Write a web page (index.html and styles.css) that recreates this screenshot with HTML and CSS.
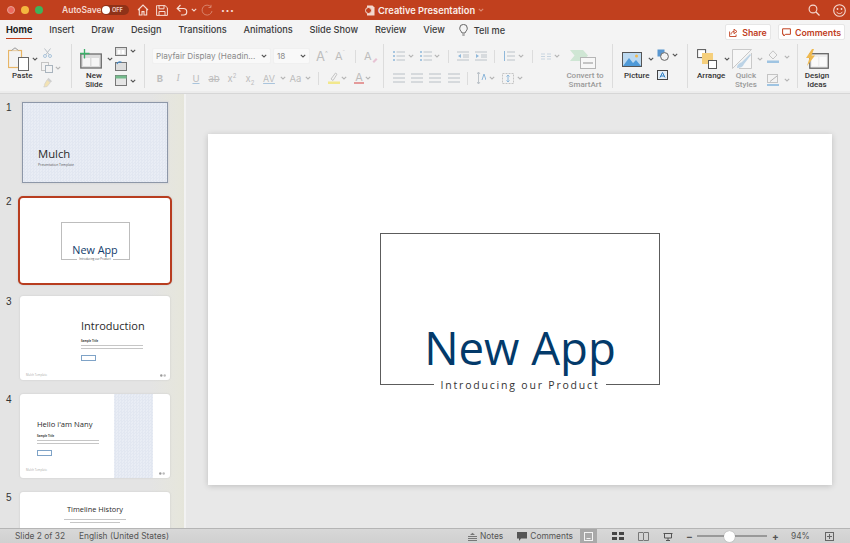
FILE: index.html
```html
<!DOCTYPE html>
<html lang="en">
<head>
<meta charset="utf-8">
<title>Creative Presentation</title>
<link rel="stylesheet" href="styles.css">
</head>
<body>
<svg class="defs" width="0" height="0">
  <symbol id="ch" viewBox="0 0 6 4"><path d="M.8.8 3 3 5.2.8" fill="none" stroke="currentColor" stroke-width="1.1"/></symbol>
  <symbol id="lines" viewBox="0 0 12 10"><path d="M0 1h12M0 5h12M0 9h12" stroke="#b9c0c6" stroke-width="1"/></symbol>
  <symbol id="marks" viewBox="0 0 6 3"><circle cx="1.300" cy="1.500" r="1.200" fill="#9a9a9a"/><circle cx="4.700" cy="1.500" r="1.200" fill="#bcbcbc"/></symbol>
</svg>

<header class="titlebar">
  <span class="light red"></span><span class="light yellow"></span><span class="light green"></span>
  <span class="autosave">AutoSave</span>
  <span class="toggle"><span class="knob"></span><span class="off">OFF</span></span>
  <svg class="tb-home" width="12" height="12" viewBox="0 0 12 12"><path d="M1 6 6 1l5 5M2.3 5v6H5V7.6h2V11h2.700V5" fill="none" stroke="#f6dcd4" stroke-width="1.100"/></svg>
  <svg class="tb-save" width="12" height="11" viewBox="0 0 12 11"><path d="M1.500.6h7.500l2.400 2.200v7.600H.6V.6zM3 .8v3h5v-3M3 10V6.500h6V10" fill="none" stroke="#f6dcd4" stroke-width="1"/></svg>
  <svg class="tb-undo" width="12" height="12" viewBox="0 0 12 12"><path d="M1.500 4.500h6a3 3 0 0 1 0 6.500H5M4.500 1 1.200 4.500 4.500 7.500" fill="none" stroke="#f6dcd4" stroke-width="1.200"/></svg>
  <svg class="chev tb-ch" width="6" height="4"><use href="#ch"/></svg>
  <svg class="tb-redo" width="12" height="12" viewBox="0 0 12 12"><path d="M10 3a5 5 0 1 0 1 4M10 .8V3.500H7.500" fill="none" stroke="#d9826a" stroke-width="1"/></svg>
  <span class="dots">···</span>
  <span class="doc">
    <svg width="10" height="11" viewBox="0 0 10 11"><path d="M2 .5h5.500L9.500 2.500v8H2z" fill="#f3d8cf"/><circle cx="3.500" cy="5.500" r="3" fill="#c1401e" stroke="#f3d8cf"/></svg>
    <span class="doc-name">Creative Presentation</span>
    <svg class="doc-ch" width="6" height="4"><use href="#ch"/></svg>
  </span>
  <svg class="tb-search" width="12" height="12" viewBox="0 0 12 12"><circle cx="5" cy="5" r="3.900" fill="none" stroke="#f6dcd4" stroke-width="1.100"/><path d="m8 8 3.500 3.500" stroke="#f6dcd4" stroke-width="1.200"/></svg>
  <svg class="tb-smile" width="13" height="13" viewBox="0 0 13 13"><circle cx="6.500" cy="6.500" r="5.800" fill="none" stroke="#f6dcd4" stroke-width="1.100"/><circle cx="4.500" cy="5" r=".9" fill="#f6dcd4"/><circle cx="8.500" cy="5" r=".9" fill="#f6dcd4"/><path d="M3.500 7.800c1.500 2.400 4.500 2.400 6 0" fill="none" stroke="#f6dcd4"/></svg>
</header>

<nav class="tabs">
  <span class="tab active">Home</span>
  <span class="tab">Insert</span>
  <span class="tab">Draw</span>
  <span class="tab">Design</span>
  <span class="tab">Transitions</span>
  <span class="tab">Animations</span>
  <span class="tab">Slide Show</span>
  <span class="tab">Review</span>
  <span class="tab">View</span>
  <span class="tell">
    <svg width="9" height="12" viewBox="0 0 9 12"><path d="M3 9C2.500 7.300.7 6.500.7 4.200a3.800 3.800 0 0 1 7.600 0C8.300 6.500 6.500 7.300 6 9zM3.300 11h2.400" fill="none" stroke="#555" stroke-width=".9"/></svg>
    <span>Tell me</span>
  </span>
  <span class="tab-actions">
    <span class="btn share">
      <svg width="9" height="9" viewBox="0 0 9 9"><path d="M5 3.500C3 3.500 2 5 2 6.500M5 1.200 8 3.500 5 5.700zM.6 3.500v5h6.500V6.500" fill="none" stroke="#c1401e" stroke-width=".9"/></svg>
      Share
    </span>
    <span class="btn comments">
      <svg width="9" height="9" viewBox="0 0 9 9"><path d="M.6.8h7.800v5.500H3.500L1.800 8V6.300H.6z" fill="none" stroke="#c1401e"/></svg>
      Comments
    </span>
  </span>
</nav>

<section class="ribbon">
  <div class="group g-clip">
    <div class="big paste">
      <div class="icobox">
        <svg width="21" height="24" viewBox="0 0 21 24"><rect x=".5" y="3.500" width="13" height="17" fill="none" stroke="#e7b566" stroke-width="1.200"/><path d="M3.500 3.500 7 .8l3.500 2.700" fill="#eee" stroke="#999"/><rect x="10.500" y="10.500" width="10" height="13" fill="#fff" stroke="#666"/></svg>
        <svg class="chev dark" width="6" height="4"><use href="#ch"/></svg>
      </div>
      <span class="lbl">Paste</span>
    </div>
    <div class="clip-tools">
      <svg class="ct-cut" width="9" height="10" viewBox="0 0 9 10"><path d="M1.500.5 6.500 7M7.500.5l-5 6.500" stroke="#b9c0c6"/><circle cx="2" cy="8" r="1.500" fill="none" stroke="#a9c4dc"/><circle cx="7" cy="8" r="1.500" fill="none" stroke="#a9c4dc"/></svg>
      <span class="ct-row">
        <svg width="12" height="11" viewBox="0 0 12 11"><rect x=".5" y=".5" width="7" height="8" fill="none" stroke="#c4c4c4"/><rect x="4.500" y="3.500" width="7" height="7" fill="#f3f3f3" stroke="#a9b4be"/></svg>
        <svg class="chev ml2" width="6" height="4"><use href="#ch"/></svg>
      </span>
      <svg class="ct-brush" width="10" height="11" viewBox="0 0 11 12"><path d="M6 .8 10 4.500 8 6 4.500 2.800z" fill="#cfcfcf"/><path d="M4.500 3 8 6 4.500 10.500.8 11c.6-1.200 1.300-2 .8-3z" fill="#f2e2b4" stroke="#c9c9c9" stroke-width=".6"/></svg>
    </div>
  </div>

  <div class="group g-slides">
    <div class="big newslide">
      <div class="icobox">
        <svg width="22" height="20" viewBox="0 0 22 20"><rect x=".8" y="5" width="20.500" height="14" fill="#dcdcdc" stroke="#6d6d6d" stroke-width="1.300"/><rect x="3" y="9" width="7" height="8" fill="#f6f6f6"/><rect x="11.500" y="9" width="7.500" height="8" fill="#f6f6f6"/><path d="M4.500 0v9.500M0 4.500h9.500" stroke="#3db06a" stroke-width="1.300"/></svg>
        <svg class="chev dark ml2" width="6" height="4"><use href="#ch"/></svg>
      </div>
      <span class="lbl">New<br>Slide</span>
    </div>
    <div class="slide-tools">
      <span class="st-row"><svg width="12" height="9" viewBox="0 0 12 9"><rect x=".5" y=".5" width="11" height="8" fill="#ddd" stroke="#777"/><rect x="2.500" y="3" width="3" height="4" fill="#fff"/><rect x="6.500" y="3" width="3" height="4" fill="#fff"/></svg><svg class="chev dark" width="6" height="4"><use href="#ch"/></svg></span>
      <span class="st-row"><svg width="12" height="10" viewBox="0 0 12 10"><rect x=".5" y="1.500" width="11" height="8" fill="#ddd" stroke="#777"/><path d="M6.500 1.300A3 3 0 0 0 2 3" fill="none" stroke="#3f86c6" stroke-width="1.200"/></svg></span>
      <span class="st-row"><svg width="12" height="11" viewBox="0 0 12 11"><rect x=".5" y=".5" width="11" height="10" fill="#e5e5e5" stroke="#777"/><rect x=".5" y=".5" width="11" height="3" fill="#74bb8c"/></svg><svg class="chev dark" width="6" height="4"><use href="#ch"/></svg></span>
    </div>
  </div>

  <div class="group g-font">
    <div class="row-top">
      <span class="select fontsel"><span>Playfair Display (Headin...</span><svg class="chev dark" width="6" height="4"><use href="#ch"/></svg></span>
      <span class="select sizesel"><span>18</span><svg class="chev dark" width="6" height="4"><use href="#ch"/></svg></span>
      <span class="dis bigA ml6">A<sup>^</sup></span>
      <span class="dis smallA ml8">A<sup>ˇ</sup></span>
      <span class="vsep ml9"></span>
      <span class="dis clearA ml8">A<svg width="6" height="6" viewBox="0 0 6 6"><path d="M.5 4.500 4 1l1.500 1.500-3.500 3.500z" fill="#e7c3d4"/></svg></span>
    </div>
    <div class="row-bot font-bot">
      <span class="cell w18 b">B</span>
      <span class="cell w18 it">I</span>
      <span class="cell w18 un">U</span>
      <span class="cell w18 st">ab</span>
      <span class="cell w18">x<sup>2</sup></span>
      <span class="cell w18">x<sub>2</sub></span>
      <span class="cell w20 av">AV</span><svg class="chev cw" width="6" height="4"><use href="#ch"/></svg>
      <span class="cell w17">Aa</span><svg class="chev cw" width="6" height="4"><use href="#ch"/></svg>
      <span class="vsep ml6"></span>
      <svg class="ml9" width="12" height="12" viewBox="0 0 12 12"><path d="m3 7 4.500-6 1.500 1.200L5 8.500z" fill="none" stroke="#c4c4c4"/><rect y="9.500" width="12" height="2.500" fill="#f2e88d"/></svg>
      <svg class="chev cw" width="6" height="4"><use href="#ch"/></svg>
      <span class="fontA ml6">A</span>
      <svg class="chev cw ml2" width="6" height="4"><use href="#ch"/></svg>
    </div>
  </div>

  <div class="group g-para">
    <div class="para-rows">
      <div class="row-top para-top">
        <svg width="12" height="10" viewBox="0 0 12 10"><path d="M3.500 1H12M3.500 5H12M3.500 9H12" stroke="#bcc3c9"/><path d="M0 1h2M0 5h2M0 9h2" stroke="#8fb8da" stroke-width="1.500"/></svg>
        <svg class="chev ml3" width="6" height="4"><use href="#ch"/></svg>
        <svg class="ml6" width="12" height="10" viewBox="0 0 12 10"><path d="M3.500 1H12M3.500 5H12M3.500 9H12" stroke="#bcc3c9"/><path d="M0 1h2M0 5h2M0 9h2" stroke="#8fb8da" stroke-width="1.500"/></svg>
        <svg class="chev ml2" width="6" height="4"><use href="#ch"/></svg>
        <span class="vsep ml8"></span>
        <svg class="ml8" width="12" height="10" viewBox="0 0 12 10"><path d="M0 1h12M6 4h6M6 6h6M0 9h12" stroke="#bcc3c9"/><path d="M4 3 1 5l3 2z" fill="#8fb8da"/></svg>
        <svg class="ml6" width="12" height="10" viewBox="0 0 12 10"><path d="M0 1h12M6 4h6M6 6h6M0 9h12" stroke="#bcc3c9"/><path d="m1 3 3 2-3 2z" fill="#8fb8da"/></svg>
        <span class="vsep ml7"></span>
        <svg class="ml8" width="12" height="10" viewBox="0 0 12 10"><path d="M4 1h8M4 5h8M4 9h8" stroke="#bcc3c9"/><path d="M1.500 0v10" stroke="#8fb8da"/></svg>
        <svg class="chev ml3" width="6" height="4"><use href="#ch"/></svg>
        <span class="vsep ml8"></span>
        <svg class="ml8" width="10" height="7" viewBox="0 0 10 7"><path d="M0 1h4M6 1h4M0 3.500h4M6 3.500h4M0 6h4M6 6h4" stroke="#c8d5e0"/></svg>
        <svg class="chev ml3" width="6" height="4"><use href="#ch"/></svg>
      </div>
      <div class="row-bot">
        <svg width="12" height="10"><use href="#lines"/></svg>
        <svg class="ml6" width="12" height="10"><use href="#lines"/></svg>
        <svg class="ml6" width="12" height="10"><use href="#lines"/></svg>
        <svg class="ml7" width="12" height="10"><use href="#lines"/></svg>
        <span class="vsep ml7"></span>
        <svg class="ml9" width="9" height="12" viewBox="0 0 9 12"><path d="M1.500 0v12M0 10l1.500 2L3 10M0 2l1.500-2L3 2" fill="none" stroke="#bcc3c9"/><path d="M5 8 7 2l2 6" fill="none" stroke="#8fb8da"/></svg>
        <svg class="chev ml3" width="6" height="4"><use href="#ch"/></svg>
        <svg class="ml6" width="14" height="11" viewBox="0 0 14 11"><rect x="1.500" y=".5" width="11" height="10" fill="none" stroke="#c4c4c4" stroke-dasharray="2 1"/><path d="M7 2v7M5.500 3.500 7 2l1.500 1.500M5.500 7.500 7 9l1.500-1.500" fill="none" stroke="#8fb8da"/></svg>
        <svg class="chev ml2" width="6" height="4"><use href="#ch"/></svg>
      </div>
    </div>
    <div class="big smartart">
      <div class="icobox">
        <svg width="30" height="20" viewBox="0 0 30 20"><path d="M0 1h13l5 5.500-5 5.500H0l4.500-5.500z" fill="#cfe6d4"/><rect x="10.500" y="8.500" width="15" height="11" fill="#f7f7f7" stroke="#b5b5b5"/><path d="M13 14h10" stroke="#c4c4c4" stroke-width="2"/></svg>
      </div>
      <span class="lbl dim">Convert to<br>SmartArt</span>
    </div>
  </div>

  <div class="group g-insert">
    <div class="big picture">
      <div class="icobox">
        <svg width="20" height="15" viewBox="0 0 20 15"><rect x=".5" y=".5" width="19" height="14" fill="#bcd9f0" stroke="#555"/><path d="M1 14 7 6l4 5 3-3 5 6z" fill="#4f9ad8"/><circle cx="14.500" cy="4" r="1.500" fill="#f2b84b"/></svg>
        <svg class="chev dark ml3" width="6" height="4"><use href="#ch"/></svg>
      </div>
      <span class="lbl">Picture</span>
    </div>
    <div class="ins-tools">
      <span class="st-row">
        <svg width="12" height="12" viewBox="0 0 12 12"><rect x=".5" y=".5" width="7" height="7" fill="#5a97d0"/><circle cx="7.500" cy="7.500" r="3.900" fill="#f3f3f3" stroke="#666"/></svg>
        <svg class="chev dark" width="6" height="4"><use href="#ch"/></svg>
      </span>
      <svg class="textbox" width="11" height="10" viewBox="0 0 11 10"><rect x=".5" y=".5" width="10" height="9" fill="#e5eef6" stroke="#444"/><path d="M3 7.500 5.500 2.500 8 7.500M4 6h3" fill="none" stroke="#2d7ec4"/></svg>
    </div>
  </div>

  <div class="group g-draw">
    <div class="big arrange">
      <div class="icobox">
        <svg width="21" height="20" viewBox="0 0 21 20"><rect x=".6" y=".6" width="8" height="8" fill="#fff" stroke="#555"/><rect x="5" y="4" width="11" height="11" fill="#f5cf7c"/><rect x="11.500" y="11.500" width="8" height="8" fill="#fff" stroke="#555"/></svg>
        <svg class="chev dark ml3" width="6" height="4"><use href="#ch"/></svg>
      </div>
      <span class="lbl">Arrange</span>
    </div>
    <div class="big quick">
      <div class="icobox">
        <svg width="20" height="20" viewBox="0 0 20 20"><path d="M.5 19.500V.5h19L.5 19.500zM19.500 4v15.500H7" fill="#f7f7f7" stroke="#c9c9c9"/><path d="M5 19c0-4 3-5 5-6l8-8 1 1-7 9c-1 3-4 4-7 4z" fill="#bcd3e6"/></svg>
        <svg class="chev ml2" width="6" height="4"><use href="#ch"/></svg>
      </div>
      <span class="lbl dim">Quick<br>Styles</span>
    </div>
    <div class="draw-tools">
      <span class="st-row">
        <svg width="12" height="13" viewBox="0 0 12 13"><path d="M6 .8 10 5 6 9 2 5z" fill="none" stroke="#c4c4c4"/><rect y="10.500" width="12" height="2.500" fill="#9fc4e2"/></svg>
        <svg class="chev ml2" width="6" height="4"><use href="#ch"/></svg>
      </span>
      <span class="st-row">
        <svg width="12" height="12" viewBox="0 0 12 12"><rect x=".5" y=".5" width="10" height="8" fill="none" stroke="#c4c4c4"/><path d="M3 7.500 10 2" stroke="#b4b4b4"/><rect y="10" width="12" height="2" fill="#9fc4e2"/></svg>
        <svg class="chev ml2" width="6" height="4"><use href="#ch"/></svg>
      </span>
    </div>
  </div>

  <div class="group g-design">
    <div class="big ideas">
      <div class="icobox">
        <svg width="23" height="20" viewBox="0 0 23 20"><rect x="3.800" y="4.700" width="18.500" height="14.500" fill="#eee" stroke="#666" stroke-width="1.300"/><rect x="6" y="8" width="6" height="9" fill="#fafafa"/><rect x="13.500" y="8" width="7" height="9" fill="#fafafa"/><path d="M6 0 0 9h3.500L1 17 9 6.500H5.500L8 0z" fill="#efb94f"/></svg>
      </div>
      <span class="lbl">Design<br>Ideas</span>
    </div>
  </div>
</section>

<main class="workspace">
  <aside class="sorter">
    <div class="entry first">
      <span class="num">1</span>
      <div class="thumb t1">
        <span class="t1-title">Mulch</span>
        <span class="t1-sub">Presentation Template</span>
      </div>
    </div>
    <div class="entry second">
      <span class="num">2</span>
      <div class="thumb t2">
        <div class="t2-frame">
          <span class="t2-title">New App</span>
          <span class="t2-cap">Introducing our Product</span>
        </div>
      </div>
    </div>
    <div class="entry">
      <span class="num">3</span>
      <div class="thumb t3">
        <span class="t3-title">Introduction</span>
        <span class="tiny-head">Sample Title</span>
        <span class="tiny-line"></span><span class="tiny-line"></span>
        <span class="tiny-btn"></span>
        <div class="foot"><span>Mulch Template</span><svg width="6" height="3"><use href="#marks"/></svg></div>
      </div>
    </div>
    <div class="entry">
      <span class="num">4</span>
      <div class="thumb t4">
        <div class="t4-text">
          <span class="t4-title">Hello i'am Nany</span>
          <span class="tiny-head">Sample Title</span>
          <span class="tiny-line"></span><span class="tiny-line"></span>
          <span class="tiny-btn"></span>
          <div class="foot"><span>Mulch Template</span></div>
        </div>
        <div class="t4-pane"></div>
        <div class="t4-end"><svg width="6" height="3"><use href="#marks"/></svg></div>
      </div>
    </div>
    <div class="entry">
      <span class="num">5</span>
      <div class="thumb t5">
        <span class="t5-title">Timeline History</span>
        <span class="tiny-line"></span><span class="tiny-line short"></span>
      </div>
    </div>
  </aside>
  <div class="stage">
    <article class="slide">
      <div class="frame">
        <h1>New App</h1>
        <span class="frame-cap">Introducing our Product</span>
      </div>
    </article>
  </div>
</main>

<footer class="status">
  <span class="st-l1">Slide 2 of 32</span>
  <span class="st-l2">English (United States)</span>
  <span class="st-right">
    <svg width="9" height="9" viewBox="0 0 9 9"><path d="M2 3 4.500.8 7 3z" fill="#777"/><path d="M0 4.500h9M0 6.500h9M0 8.500h9" stroke="#777"/></svg>
    <span class="st-notes">Notes</span>
    <svg class="ml14" width="10" height="9" viewBox="0 0 10 9"><path d="M0 0h10v6.500H4L2 9V6.500H0z" fill="#555"/></svg>
    <span class="st-notes">Comments</span>
    <span class="view-on"><svg width="9" height="9" viewBox="0 0 9 9"><rect x=".5" y=".5" width="8" height="8" fill="none" stroke="#f4f4f4"/><path d="M2.500 6.500h4" stroke="#f4f4f4"/></svg></span>
    <svg class="ml15" width="12" height="8" viewBox="0 0 12 8"><path d="M0 0h5v3H0zM7 0h5v3H7zM0 5h5v3H0zM7 5h5v3H7z" fill="#444"/></svg>
    <svg class="ml14" width="11" height="9" viewBox="0 0 11 9"><path d="M.5.500h4.500l.5.500.5-.5h4.500v8H6l-.5.500-.5-.5H.5zM5.500 1v7" fill="none" stroke="#777"/></svg>
    <svg class="ml14" width="10" height="9" viewBox="0 0 10 9"><path d="M.5 1.500h9M1.500 1.500v4.500h7V1.500M5 6v2.500M3 8.500h4" fill="none" stroke="#555"/></svg>
    <span class="zoom-minus">−</span>
    <span class="slider"><span class="thumb-dot"></span></span>
    <span class="zoom-plus">+</span>
    <span class="zoom-val">94%</span>
    <svg class="fit" width="9" height="9" viewBox="0 0 9 9"><rect x=".5" y=".5" width="8" height="8" fill="none" stroke="#666"/><path d="M4.500 2v5M2 4.500h5" stroke="#666"/></svg>
  </span>
</footer>
</body>
</html>
```

FILE: styles.css
```css
* { box-sizing: border-box; }
html, body { margin: 0; height: 543px; overflow: hidden; }
body {
  width: 850px;
  display: flex;
  flex-direction: column;
  font-family: Inter, "Liberation Sans", sans-serif;
  color: #333;
  background: #e8e8e8;
}
.defs { position: absolute; }
svg { display: block; flex: none; }

.ml2 { margin-left: 2px; }
.ml3 { margin-left: 3px; }
.ml5 { margin-left: 5px; }
.ml6 { margin-left: 6px; }
.ml7 { margin-left: 7px; }
.ml8 { margin-left: 8px; }
.ml9 { margin-left: 9px; }
.ml14 { margin-left: 14px; }
.ml15 { margin-left: 15px; }

.chev { color: #b5b5b5; width: 6px; height: 4px; }
.chev.dark { color: #555; }

/* Title bar */
.titlebar {
  height: 20px;
  flex: none;
  display: flex;
  align-items: center;
  padding-left: 7px;
  background: #c1401e;
  color: #f8e4dd;
}
.light { width: 8px; height: 8px; border-radius: 50%; margin-right: 6px; }
.light.red { background: #ec6a5e; border: 1px solid #e9a093; }
.light.yellow { background: #f4b73f; }
.light.green { background: #3fb35a; }
.autosave { margin-left: 13px; font-size: 8.500px; font-weight: 600; width: 39px; white-space: nowrap; color: #f5d9cf; }
.toggle {
  width: 28px; height: 10px; border-radius: 5px; background: #8f3218;
  display: flex; align-items: center; padding-left: 1px;
}
.knob { width: 8px; height: 8px; border-radius: 50%; background: #fff; }
.off { font-size: 5.500px; font-weight: 700; margin-left: 2px; color: #f0cfc4; }
.tb-home { margin-left: 8px; }
.tb-save { margin-left: 7px; }
.tb-undo { margin-left: 8px; }
.tb-ch { margin-left: 3px; color: #f3d8cf; }
.tb-redo { margin-left: 4px; }
.dots { margin-left: 8px; font-size: 12px; font-weight: 700; width: 12px; letter-spacing: .5px; color: #f6dcd4; }
.doc { margin-left: 132px; display: flex; align-items: center; gap: 3px; width: 443px; }
.doc-name { font-size: 9.300px; font-weight: 600; color: #fbeee9; white-space: nowrap; }
.doc-ch { color: #dd8c74; }
.tb-smile { margin-left: 13px; }

/* Tabs */
.tabs {
  height: 20px; flex: none;
  display: flex; align-items: flex-start;
  padding-left: 6px;
  background: #f4f4f4;
  font-size: 9.200px; font-weight: 500; color: #3c3c3c;
}
.tab { margin-right: 16.800px; height: 19px; line-height: 20px; white-space: nowrap; }
.tab.active { font-weight: 700; color: #222; border-bottom: 1.500px solid #c1401e; }
.tell { display: flex; align-items: center; gap: 6px; height: 20px; margin-left: -3px; white-space: nowrap; }
.tab-actions { margin-left: auto; display: flex; gap: 7px; padding: 4px 5px 0 0; }
.btn {
  height: 16px; display: flex; align-items: center; justify-content: center; gap: 4px;
  background: #fff; border: 1px solid #e6e6e6; border-radius: 2px;
  color: #c1401e; font-size: 8.800px; font-weight: 600;
}
.share { width: 46px; }
.comments { width: 67px; }

/* Ribbon */
.ribbon {
  height: 54px; flex: none;
  display: flex; align-items: flex-start;
  padding-top: 4px;
  background: #f3f3f3;
  border-bottom: 1px solid #d6d6d6;
  box-shadow: inset 0 -2px 0 #ececec;
}
.group { display: flex; height: 44px; border-right: 1px solid #dcdcdc; flex: none; }
.big { display: flex; flex-direction: column; align-items: center; padding-top: 3px; flex: none; }
.icobox { height: 24px; display: flex; align-items: center; gap: 3px; flex: none; }
.lbl { font-family: Roboto, sans-serif; font-size: 8px; line-height: 8.500px; font-weight: 500; text-align: center; color: #333; margin-top: 1px; white-space: nowrap; }
.lbl.dim { color: #9a9a9a; }

.g-clip { width: 72px; padding-left: 8px; }
.paste { width: 32px; align-items: flex-start; }
.paste .lbl { margin-left: 4px; }
.clip-tools { display: flex; flex-direction: column; gap: 4px; padding-top: 4px; margin-left: 1px; }
.ct-cut { margin-left: 2px; }
.ct-row { display: flex; align-items: center; }
.ct-brush { margin-left: 2px; }

.g-slides { width: 73px; padding-left: 8px; }
.newslide { width: 31px; align-items: flex-start; }
.newslide .lbl { margin-left: 3px; width: 22px; }
.slide-tools { display: flex; flex-direction: column; margin-left: 4px; }
.st-row { height: 15px; display: flex; align-items: center; gap: 3px; }

.g-font { width: 239px; padding-left: 7px; flex-direction: column; }
.row-top { display: flex; align-items: center; height: 16px; margin-top: 4px; }
.row-bot { display: flex; align-items: center; height: 18px; margin-top: 5px; color: #bdbdbd; font-size: 9.500px; }
.select {
  height: 16px; background: #f9f9f9; border-radius: 2px; border: 1px solid #f0f0f0;
  display: flex; align-items: center; justify-content: space-between; padding: 0 3px 0 3px;
  font-size: 8.200px; color: #8a8a8a; white-space: nowrap;
}
.fontsel { width: 119px; margin-right: 2px; }
.sizesel { width: 37px; }
.dis { color: #bdbdbd; display: flex; align-items: flex-start; line-height: 14px; }
.dis sup { font-size: 6px; line-height: 8px; }
.bigA { font-size: 13px; width: 11px; }
.smallA { font-size: 11px; width: 11px; }
.clearA { font-size: 11px; align-items: flex-end; width: 12px; }
.vsep { width: 1px; height: 13px; background: #dcdcdc; flex: none; }
.font-bot { margin-left: -1px; }
.cell { text-align: center; flex: none; }
.w17 { width: 17px; } .w18 { width: 18px; } .w20 { width: 20px; }
.cell sup, .cell sub { font-size: 6px; line-height: 0; }
.b { font-weight: 700; } .it { font-style: italic; font-family: "Liberation Serif", serif; }
.un { text-decoration: underline; text-decoration-color: #a9c4dc; }
.st { text-decoration: line-through; }
.av { font-size: 9px; text-decoration: underline; text-decoration-color: #a9c4dc; }
.cw { margin: 0 1px; }
.fontA { width: 10px; text-align: center; font-size: 11px; line-height: 10px; border-bottom: 2px solid #e49a9a; }

.g-para { width: 229px; padding-left: 9px; }
.para-rows { width: 173px; flex: none; }
.smartart { width: 38px; }
.smartart .lbl { color: #9a9a9a; }

.g-insert { width: 75px; padding-left: 9px; }
.picture { width: 28px; align-items: flex-start; }
.picture .lbl { margin-left: 2px; }
.ins-tools { margin-left: 7px; padding-top: 3px; display: flex; flex-direction: column; }
.textbox { margin-top: 8px; }

.g-draw { width: 110px; padding-left: 9px; }
.arrange { width: 31px; align-items: flex-start; }
.quick { width: 31px; margin-left: 4px; align-items: flex-start; }
.quick .lbl { margin-left: 3px; }
.draw-tools { margin-left: 4px; padding-top: 5px; display: flex; flex-direction: column; gap: 8px; }

.g-design { border-right: 0; }
.ideas { width: 38px; }

/* Workspace */
.workspace { flex: 1; display: flex; min-height: 0; }
.sorter {
  width: 186px; flex: none; overflow: hidden;
  background: linear-gradient(90deg, #e4e4e4 0, #e4e4e4 150px, #e6e6dd 178px, #e5e5da 184px, #f2f2f2 184px);
  padding-top: 8px;
  display: flex; flex-direction: column;
}
.entry { display: flex; flex: none; padding-left: 6px; margin-bottom: 14px; }
.num { width: 14px; font-size: 10px; line-height: 11px; color: #333; font-family: "Liberation Sans", sans-serif; }
.thumb { width: 150px; height: 84px; flex: none; background: #fff; border-radius: 3px; box-shadow: 0 0 2px #c4c4c4; display: flex; flex-direction: column; font-family: "Open Sans", sans-serif; }
.first { margin-bottom: 13px; }
.t1 {
  width: 146px; height: 81px; margin-left: 2px;
  border: 1.500px solid #8d97a8; border-radius: 0;
  background: repeating-conic-gradient(#e2e7f1 0 25%, #e9edf5 0 50%) 0 0 / 3px 3px;
  padding: 43px 0 0 15px; outline: 1px solid #dcdcdc;
}
.t1-title { font-size: 11.300px; line-height: 16px; color: #2a2a2a; }
.t1-sub { font-size: 3.400px; line-height: 5px; color: #555; white-space: nowrap; }
.second { margin-bottom: 11px; }
.second .num { width: 12px; }
.t2 { width: 154px; height: 89px; border: 2.500px solid #b83d1f; border-radius: 5px; align-items: center; padding-top: 24px; }
.t2-frame { width: 69px; height: 38px; border: 1px solid #bdbdbd; display: flex; flex-direction: column; align-items: center; justify-content: flex-end; }
.t2-title { font-size: 10.800px; line-height: 12px; font-weight: 500; color: #123c6b; margin-bottom: 1px; }
.t2-cap { font-size: 2.800px; line-height: 4px; margin-bottom: -2px; padding: 0 2px; background: #fff; color: #555; white-space: nowrap; }
.t3 { padding: 22px 0 0 61px; }
.t3-title { font-size: 11px; line-height: 15px; color: #2a2a2a; }
.tiny-head { font-size: 2.800px; line-height: 4px; font-weight: 700; color: #444; margin-top: 5px; }
.t3 .tiny-head { margin-top: 6px; }
.tiny-line { display: block; height: 1px; width: 62px; background: #c6c6c6; margin-top: 2px; flex: none; }
.tiny-line.short { width: 50px; }
.tiny-btn { display: block; width: 15px; height: 6px; border: 1px solid #7fa3c7; margin-top: 6px; flex: none; }
.foot { display: flex; justify-content: space-between; align-items: center; font-size: 2.800px; line-height: 5px; color: #aaa; white-space: nowrap; }
.t3 .foot { margin: 12px 0 0 -55px; width: 140px; }
.t4 { flex-direction: row; }
.t4-text { width: 94px; padding: 24px 0 0 17px; display: flex; flex-direction: column; }
.t4-title { font-size: 7.600px; line-height: 13px; color: #2a2a2a; white-space: nowrap; }
.t4 .tiny-head { margin-top: 3px; }
.t4 .foot { margin: 12px 0 0 -11px; }
.t4-pane { width: 39px; background: repeating-conic-gradient(#e2e7f1 0 25%, #e9edf5 0 50%) 0 0 / 3px 3px; }
.t4-end { flex: 1; display: flex; align-items: flex-end; justify-content: center; padding-bottom: 3px; }
.t5 { align-items: center; padding-top: 11px; }
.t5-title { font-size: 7.400px; line-height: 13px; margin-bottom: 1px; color: #2a2a2a; }

.stage { flex: 1; padding: 40px 0 0 22px; }
.slide {
  width: 624px; height: 351px; background: #fff;
  box-shadow: 0 1px 6px rgba(0,0,0,.18);
  padding: 99px 0 0 172px;
  font-family: "Open Sans", sans-serif;
}
.frame {
  width: 280px; height: 152px;
  border: 1px solid #5c5c5c;
  display: flex; flex-direction: column; align-items: center; justify-content: flex-end;
}
.frame h1 { margin: 0 0 6px; font-size: 45.600px; line-height: 50px; font-weight: 400; color: #033a6a; white-space: nowrap; }
.frame-cap {
  flex: none; height: 14px; line-height: 14px; margin-bottom: -8px; padding: 0 7px;
  background: #fff;
  font-size: 10.500px; letter-spacing: 1.800px; color: #333; white-space: nowrap;
}

/* Status bar */
.status {
  height: 15px; flex: none;
  display: flex; align-items: center;
  background: linear-gradient(#d8d8d8, #d0d0d0);
  border-top: 1px solid #b5b5b5;
  font-size: 8.400px; color: #555;
  padding-left: 15px;
}
.st-l1 { width: 64px; white-space: nowrap; }
.st-l2 { white-space: nowrap; }
.st-right { margin-left: auto; display: flex; align-items: center; height: 100%; padding-right: 16px; }
.st-notes { margin-left: 3px; }
.view-on { width: 17px; height: 100%; margin-left: 7px; background: #a9a9a9; display: flex; align-items: center; justify-content: center; }
.zoom-minus { margin-left: 13px; font-size: 10px; font-weight: 700; width: 6px; }
.slider { width: 70px; height: 2px; margin-left: 5px; background: #999; display: flex; align-items: center; padding-left: 27px; }
.thumb-dot { width: 11px; height: 11px; border-radius: 50%; background: #fff; box-shadow: 0 0 1px #888; flex: none; }
.zoom-plus { margin-left: 5px; font-size: 10px; font-weight: 700; width: 6px; }
.zoom-val { margin-left: 13px; width: 20px; }
.fit { margin-left: 14px; }
```
